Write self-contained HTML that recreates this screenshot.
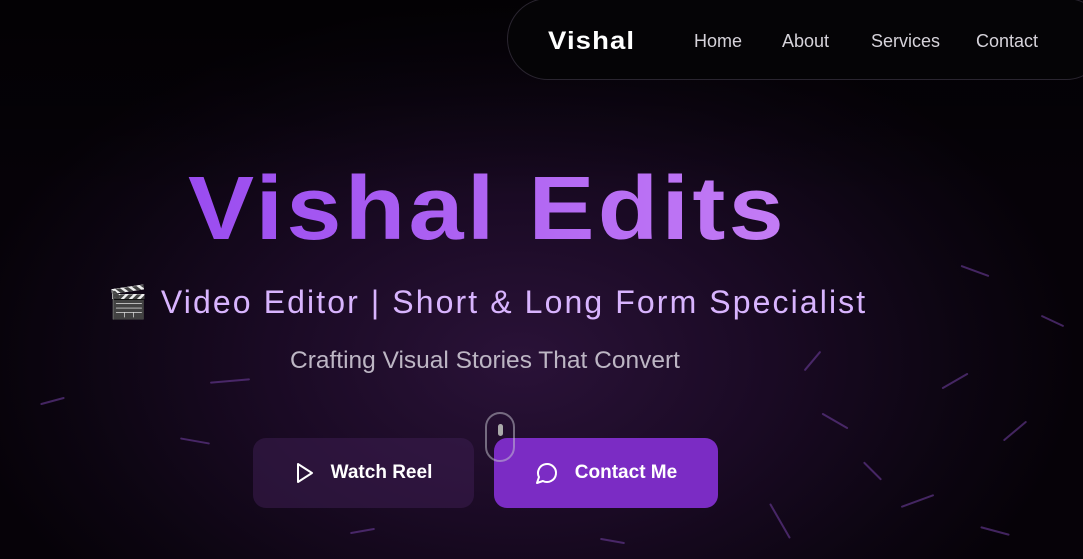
<!DOCTYPE html>
<html><head><meta charset="utf-8"><style>
*{margin:0;padding:0;box-sizing:border-box}
body{width:1083px;height:559px;overflow:hidden;background:#050207;font-family:"Liberation Sans",sans-serif;position:relative}
.bg{position:absolute;inset:0;background:radial-gradient(ellipse 560px 360px at 520px 360px,#2a1238 0%,#1a0a24 45%,#0c0511 80%,#060208 100%)}
.bg2{position:absolute;inset:0;background:linear-gradient(180deg,rgba(0,0,0,.55) 0%,rgba(0,0,0,0) 35%,rgba(0,0,0,0) 100%)}
nav{position:absolute;left:507px;top:-2px;width:600px;height:82px;border:1px solid #2a2530;border-radius:42px;background:#050406}
.logo{position:absolute;left:40px;top:28px;color:#fff;font-weight:bold;font-size:25px;letter-spacing:1px;transform:scaleX(1.1);transform-origin:left}
.links a{position:absolute;top:32px;color:#d6d3da;font-size:18px;text-decoration:none}
h1{position:absolute;left:188px;top:158px;font-size:90px;font-weight:bold;letter-spacing:3px;background:linear-gradient(90deg,#9a4cf0,#c47cf5);-webkit-background-clip:text;color:transparent;transform:scaleX(1.1);transform-origin:left;white-space:nowrap}
.sub{position:absolute;left:108px;top:283px;font-size:32px;color:#d8b4fe;letter-spacing:2.1px;white-space:nowrap}
.tag{position:absolute;left:290px;top:347px;font-size:24.5px;color:#bdb6c4}
.btn{position:absolute;top:438px;height:70px;border-radius:13px;color:#fff;font-weight:bold;font-size:19px;display:flex;align-items:center;justify-content:center;gap:16px}
.b1{left:253px;width:221px;background:rgba(60,30,80,.55)}
.b2{left:494px;width:224px;background:#7b2cc4}
.mouse{position:absolute;left:485px;top:412px;width:30px;height:50px;border:2px solid rgba(200,200,210,.5);border-radius:15px}
.mouse:after{content:"";position:absolute;left:11px;top:10px;width:5px;height:12px;background:#aaa;border-radius:3px}
.s{position:absolute;height:2px;background:#6a3c9a;border-radius:1px;opacity:.6}
</style></head><body>
<div class="bg"></div><div class="bg2"></div>
<div class="s" style="left:210px;top:380px;width:40px;transform:rotate(-5deg)"></div>
<div class="s" style="left:820px;top:420px;width:30px;transform:rotate(30deg)"></div>
<div class="s" style="left:900px;top:500px;width:35px;transform:rotate(-20deg)"></div>
<div class="s" style="left:960px;top:270px;width:30px;transform:rotate(20deg)"></div>
<div class="s" style="left:760px;top:520px;width:40px;transform:rotate(60deg)"></div>
<div class="s" style="left:1000px;top:430px;width:30px;transform:rotate(-40deg)"></div>
<div class="s" style="left:180px;top:440px;width:30px;transform:rotate(10deg)"></div>
<div class="s" style="left:40px;top:400px;width:25px;transform:rotate(-15deg)"></div>
<div class="s" style="left:860px;top:470px;width:25px;transform:rotate(45deg)"></div>
<div class="s" style="left:940px;top:380px;width:30px;transform:rotate(-30deg)"></div>
<div class="s" style="left:1040px;top:320px;width:25px;transform:rotate(25deg)"></div>
<div class="s" style="left:980px;top:530px;width:30px;transform:rotate(15deg)"></div>
<div class="s" style="left:800px;top:360px;width:25px;transform:rotate(-50deg)"></div>
<div class="s" style="left:600px;top:540px;width:25px;transform:rotate(10deg)"></div>
<div class="s" style="left:350px;top:530px;width:25px;transform:rotate(-10deg)"></div>
<nav><div class="logo">Vishal</div>
<div class="links"><a style="left:186px">Home</a><a style="left:274px">About</a><a style="left:363px">Services</a><a style="left:468px">Contact</a></div></nav>
<h1>Vishal Edits</h1>
<div class="sub">🎬 Video Editor | Short &amp; Long Form Specialist</div>
<div class="tag">Crafting Visual Stories That Convert</div>
<div class="btn b1"><svg width="20" height="22" viewBox="0 0 20 22"><path d="M3 2 L17 11 L3 20 Z" fill="none" stroke="#fff" stroke-width="2" stroke-linejoin="round"/></svg>Watch Reel</div>
<div class="btn b2"><svg width="24" height="24" viewBox="0 0 24 24"><path d="M7.9 20A9 9 0 1 0 4 16.1L2 22Z" fill="none" stroke="#fff" stroke-width="2" stroke-linejoin="round"/></svg>Contact Me</div>
<div class="mouse"></div>
</body></html>
